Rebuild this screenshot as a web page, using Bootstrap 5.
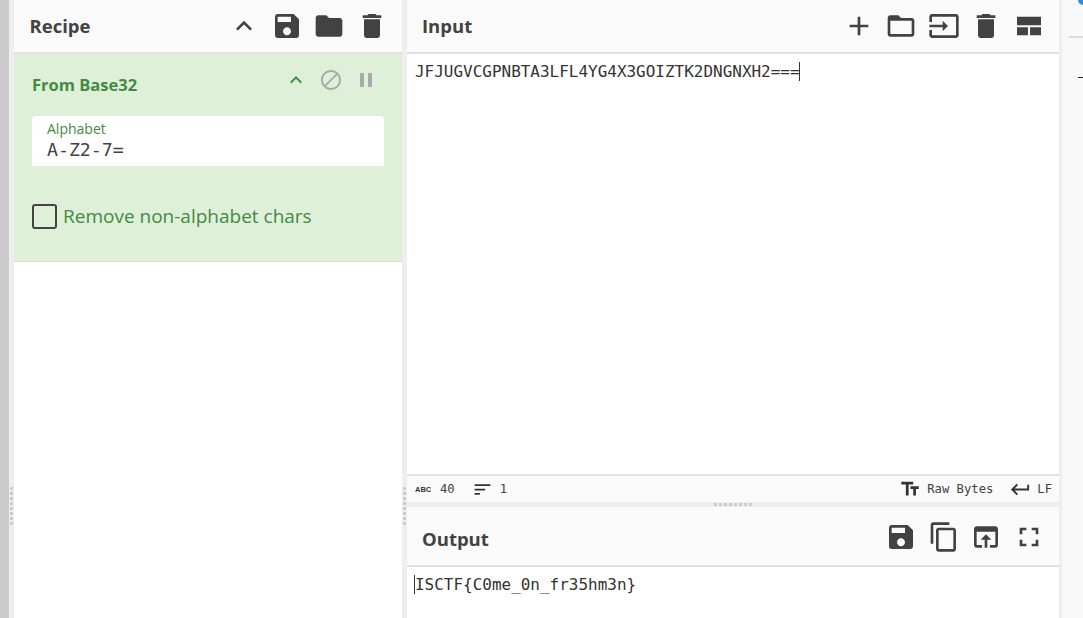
<!DOCTYPE html>
<html lang="en">
<head>
<meta charset="utf-8">
<title>CyberChef</title>
<link href="https://cdn.jsdelivr.net/npm/bootstrap@5.3.0/dist/css/bootstrap.min.css" rel="stylesheet">
<style>
html,body{height:618px;overflow:hidden;background:#fff}
body{font-family:"Open Sans","Noto Sans",sans-serif;color:#424242}
.app-shell{height:618px}
.strip-outer{width:9px;background:#ccc}
.gut-v{width:5px;background:#eee;display:flex;flex-direction:column;align-items:center;padding-top:487px;gap:2px}
.gut-v i{display:block;width:3px;height:3px;background:#ccc}
.gut-h{height:5px;background:#eee;display:flex;justify-content:center;align-items:center;gap:2px}
.gut-h i{display:block;width:3px;height:3px;background:#ccc}
.pane-recipe{width:388px}
.pane-main{width:652px}
.pane-side{background:#f8f8f8;border-left:3px solid #eee}
.side-line{height:2px;background:#ddd;margin:36px 0 0 7px}
.side-dot{position:absolute;right:0;top:0;width:5px;height:5px;background:#2a8fe0;border-bottom-left-radius:5px}
.side-dash{width:5px;height:1px;background:#222;margin:39px 0 0 16px}
.head-bar{background:#fafafa;border-bottom:2px solid #e0e0e0;padding:0 9px 0 15.5px}
.pane-main .head-bar{padding-left:15px}
.head-54{height:54px}
.head-60{height:60px}
.head-title{font-size:18.5px;font-weight:700;line-height:1;margin:0;color:#424242}
.head-title-low{padding-top:7px}
.icons-low{padding-top:1px}
.tool-btn{width:42.5px;display:flex;justify-content:center;align-items:center;border:0;background:none;padding:0;color:#424242}
.tool-btn svg{width:32px;height:32px;fill:currentColor;display:block}
.op-box{height:208px;background:#dff0d8;border-bottom:1px solid #d3e6cb;padding:0 18px}
.op-top{height:62px}
.op-title{font-size:16.5px;font-weight:700;color:#468847;line-height:1;margin:23px 0 0}
.op-ctls{margin-right:1px}
.op-ctl{width:35px;height:32px;margin-top:10px}
.op-ctl svg{width:24px;height:24px;display:block}
.c-green{fill:#468847}
.c-grey{fill:#aaa}
.op-field{background:#fff;border-radius:4px 4px 0 0;height:50px;padding:4px 15px 0}
.op-label{font-size:14px;line-height:18px;color:#468847;display:block}
.mono-val{font-family:"DejaVu Sans Mono",monospace;font-size:18.2px;line-height:23px;color:#424242;display:block}
.op-check{margin-top:37px;gap:6px}
.check-box{width:25px;height:25px;border:2px solid #444;border-radius:3px;flex:none}
.check-text{font-size:19px;color:#468847;line-height:25px;padding-top:1px}
.text-area{font-family:"DejaVu Sans Mono",monospace;font-size:15.98px;line-height:19px;color:#333;padding:8px 8px 0;white-space:pre}
.out-area{height:51px}
.caret-r{box-shadow:inset -1px 0 0 #333}
.caret-l{box-shadow:-1px 0 0 #333}
.status-bar{height:28px;background:#fafafa;border-top:2px solid #e4e4e4;padding:0 7px 0 8px;font-family:"DejaVu Sans Mono",monospace;font-size:12.2px;color:#424242}
.status-bar svg{fill:#333;display:block;flex:none}
.abc-mark{font-family:"Liberation Sans",sans-serif;font-size:7.5px;font-weight:700;color:#333;width:25px;padding-top:1px}
.sb-sort{width:21px;height:21px;margin:0 7px 0 17px}
.sb-tt{width:22px;height:22px;margin-right:6px}
.sb-ret{width:23px;height:23px;margin:0 5px 0 16px}
</style>
</head>
<body>
<svg width="0" height="0" class="position-absolute">
<symbol id="i-up" viewBox="0 0 24 24"><path d="M7.41 15.41L12 10.83l4.59 4.58L18 14l-6-6-6 6z"/></symbol>
<symbol id="i-save" viewBox="0 0 24 24"><path d="M17 3H5c-1.11 0-2 .9-2 2v14c0 1.1.89 2 2 2h14c1.1 0 2-.9 2-2V7l-4-4zm-5 16c-1.66 0-3-1.34-3-3s1.34-3 3-3 3 1.34 3 3-1.34 3-3 3zm3-10H5V5h10v4z"/></symbol>
<symbol id="i-folder" viewBox="0 0 24 24"><path d="M10 4H4c-1.1 0-1.99.9-1.99 2L2 18c0 1.1.9 2 2 2h16c1.1 0 2-.9 2-2V8c0-1.1-.9-2-2-2h-8l-2-2z"/></symbol>
<symbol id="i-trash" viewBox="0 0 24 24"><path d="M6 19c0 1.1.9 2 2 2h8c1.1 0 2-.9 2-2V7H6v12zM19 4h-3.5l-1-1h-5l-1 1H5v2h14V4z"/></symbol>
<symbol id="i-block" viewBox="0 0 24 24"><path d="M12 2C6.48 2 2 6.48 2 12s4.48 10 10 10 10-4.48 10-10S17.52 2 12 2zM4 12c0-4.42 3.58-8 8-8 1.85 0 3.55.63 4.9 1.69L5.69 16.9C4.63 15.55 4 13.85 4 12zm8 8c-1.85 0-3.55-.63-4.9-1.69L18.31 7.1C19.37 8.45 20 10.15 20 12c0 4.42-3.58 8-8 8z"/></symbol>
<symbol id="i-pause" viewBox="0 0 24 24"><path d="M6 19h4V5H6v14zm8-14v14h4V5h-4z"/></symbol>
<symbol id="i-add" viewBox="0 0 24 24"><path d="M19 13h-6v6h-2v-6H5v-2h6V5h2v6h6v2z"/></symbol>
<symbol id="i-folder-o" viewBox="0 0 24 24"><path d="M20 6h-8l-2-2H4c-1.1 0-1.99.9-1.99 2L2 18c0 1.1.9 2 2 2h16c1.1 0 2-.9 2-2V8c0-1.1-.9-2-2-2zm0 12H4V8h16v10z"/></symbol>
<symbol id="i-input" viewBox="0 0 24 24"><path d="M21 3.01H3c-1.1 0-2 .9-2 2V9h2V4.99h18v14.03H3V15H1v4.01c0 1.1.9 1.98 2 1.98h18c1.1 0 2-.88 2-1.98v-14c0-1.11-.9-2-2-2zM11 16l4-4-4-4v3H1v2h10v3z"/></symbol>
<symbol id="i-layout" viewBox="0 0 24 24"><path d="M3 5h18v6.5H3zM3 13h8.2v6H3zM12.8 13H21v6h-8.2z"/></symbol>
<symbol id="i-copy" viewBox="0 0 24 24"><path d="M16 1H4c-1.1 0-2 .9-2 2v14h2V3h12V1zm3 4H8c-1.1 0-2 .9-2 2v14c0 1.1.9 2 2 2h11c1.1 0 2-.9 2-2V7c0-1.1-.9-2-2-2zm0 16H8V7h11v14z"/></symbol>
<symbol id="i-open" viewBox="0 0 24 24"><path d="M19 4H5c-1.11 0-2 .9-2 2v12c0 1.1.89 2 2 2h4v-2H5V8h14v10h-4v2h4c1.1 0 2-.9 2-2V6c0-1.1-.89-2-2-2zm-7 6l-4 4h3v6h2v-6h3l-4-4z"/></symbol>
<symbol id="i-full" viewBox="0 0 24 24"><path d="M7 14H5v5h5v-2H7v-3zm-2-4h2V7h3V5H5v5zm12 7h-3v2h5v-5h-2v3zM14 5v2h3v3h2V5h-5z"/></symbol>
<symbol id="i-sort" viewBox="0 0 24 24"><path d="M3 18h6v-2H3v2zM3 6v2h18V6H3zm0 7h12v-2H3v2z"/></symbol>
<symbol id="i-return" viewBox="0 0 24 24"><path d="M19 7v4H5.83l3.58-3.59L8 6l-6 6 6 6 1.41-1.41L5.83 13H21V7z"/></symbol>
<symbol id="i-tt" viewBox="0 0 24 24"><path d="M2.5 4v3h5v12h3V7h5V4h-13zm19 5h-9v3h3v7h3v-7h3V9z"/></symbol>
</svg>

<div class="d-flex app-shell">
  <div class="strip-outer flex-shrink-0"></div>
  <div class="gut-v flex-shrink-0"><i></i><i></i><i></i><i></i><i></i><i></i><i></i><i></i></div>

  <section class="pane-recipe flex-shrink-0 d-flex flex-column">
    <header class="head-bar head-54 d-flex align-items-center justify-content-between">
      <h2 class="head-title">Recipe</h2>
      <div class="d-flex">
        <button class="tool-btn"><svg><use href="#i-up"/></svg></button>
        <button class="tool-btn"><svg><use href="#i-save"/></svg></button>
        <button class="tool-btn"><svg><use href="#i-folder"/></svg></button>
        <button class="tool-btn"><svg><use href="#i-trash"/></svg></button>
      </div>
    </header>
    <div class="op-box">
      <div class="op-top d-flex justify-content-between align-items-start">
        <h3 class="op-title">From Base32</h3>
        <div class="d-flex op-ctls">
          <span class="op-ctl d-flex justify-content-center align-items-center"><svg class="c-green"><use href="#i-up"/></svg></span>
          <span class="op-ctl d-flex justify-content-center align-items-center"><svg class="c-grey"><use href="#i-block"/></svg></span>
          <span class="op-ctl d-flex justify-content-center align-items-center"><svg class="c-grey"><use href="#i-pause"/></svg></span>
        </div>
      </div>
      <div class="op-field">
        <span class="op-label">Alphabet</span>
        <span class="mono-val">A-Z2-7=</span>
      </div>
      <div class="op-check d-flex align-items-center">
        <span class="check-box"></span>
        <span class="check-text">Remove non-alphabet chars</span>
      </div>
    </div>
  </section>

  <div class="gut-v flex-shrink-0"><i></i><i></i><i></i><i></i><i></i><i></i><i></i><i></i></div>

  <main class="pane-main flex-shrink-0 d-flex flex-column">
    <header class="head-bar head-54 d-flex align-items-center justify-content-between">
      <h2 class="head-title">Input</h2>
      <div class="d-flex">
        <button class="tool-btn"><svg><use href="#i-add"/></svg></button>
        <button class="tool-btn"><svg><use href="#i-folder-o"/></svg></button>
        <button class="tool-btn"><svg><use href="#i-input"/></svg></button>
        <button class="tool-btn"><svg><use href="#i-trash"/></svg></button>
        <button class="tool-btn"><svg><use href="#i-layout"/></svg></button>
      </div>
    </header>
    <div class="text-area flex-grow-1"><span class="caret-r">JFJUGVCGPNBTA3LFL4YG4X3GOIZTK2DNGNXH2===</span></div>
    <div class="status-bar d-flex align-items-center justify-content-between">
      <div class="d-flex align-items-center">
        <span class="abc-mark">ABC</span><span>40</span>
        <svg class="sb-sort"><use href="#i-sort"/></svg><span>1</span>
      </div>
      <div class="d-flex align-items-center">
        <svg class="sb-tt"><use href="#i-tt"/></svg><span>Raw Bytes</span>
        <svg class="sb-ret"><use href="#i-return"/></svg><span>LF</span>
      </div>
    </div>
    <div class="gut-h"><i></i><i></i><i></i><i></i><i></i><i></i><i></i><i></i></div>
    <header class="head-bar head-60 d-flex align-items-center justify-content-between">
      <h2 class="head-title head-title-low">Output</h2>
      <div class="d-flex icons-low">
        <button class="tool-btn"><svg><use href="#i-save"/></svg></button>
        <button class="tool-btn"><svg><use href="#i-copy"/></svg></button>
        <button class="tool-btn"><svg><use href="#i-open"/></svg></button>
        <button class="tool-btn"><svg><use href="#i-full"/></svg></button>
      </div>
    </header>
    <div class="text-area out-area"><span class="caret-l">ISCTF{C0me_0n_fr35hm3n}</span></div>
  </main>

  <aside class="pane-side flex-grow-1 position-relative">
    <div class="side-dot"></div>
    <div class="side-line"></div>
    <div class="side-dash"></div>
  </aside>
</div>
<script src="https://cdn.jsdelivr.net/npm/bootstrap@5.3.0/dist/js/bootstrap.bundle.min.js"></script>
</body>
</html>
